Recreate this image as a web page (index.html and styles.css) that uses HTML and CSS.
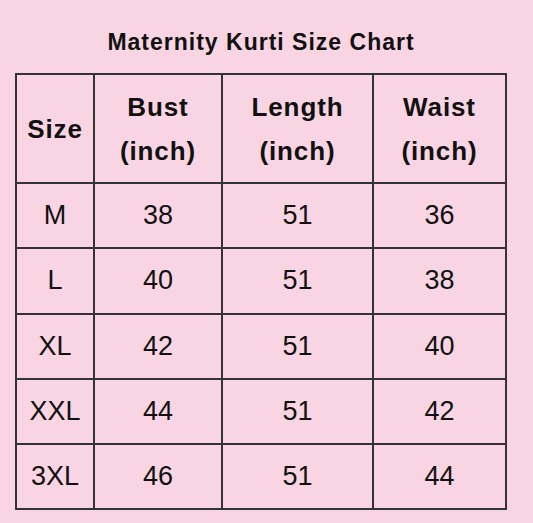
FILE: index.html
```html
<!DOCTYPE html>
<html>
<head>
<meta charset="utf-8">
<link rel="stylesheet" href="styles.css">
</head>
<body>
<div class="page">
  <h1 class="title">Maternity Kurti Size Chart</h1>
  <table class="chart">
    <colgroup>
      <col class="c1"><col class="c2"><col class="c3"><col class="c4">
    </colgroup>
    <thead>
      <tr>
        <th>Size</th>
        <th>Bust<br>(inch)</th>
        <th>Length<br>(inch)</th>
        <th>Waist<br>(inch)</th>
      </tr>
    </thead>
    <tbody>
      <tr><td>M</td><td>38</td><td>51</td><td>36</td></tr>
      <tr><td>L</td><td>40</td><td>51</td><td>38</td></tr>
      <tr><td>XL</td><td>42</td><td>51</td><td>40</td></tr>
      <tr><td>XXL</td><td>44</td><td>51</td><td>42</td></tr>
      <tr><td>3XL</td><td>46</td><td>51</td><td>44</td></tr>
    </tbody>
  </table>
</div>
</body>
</html>
```
FILE: styles.css
```css
html, body {
  margin: 0;
  padding: 0;
  background: #f9d5e3;
}
.page {
  width: 533px;
  height: 523px;
  padding-top: 27px;
  box-sizing: border-box;
  font-family: "Liberation Sans", Arial, sans-serif;
  color: #111;
}
.title {
  margin: 0 0 16px 0;
  padding-right: 11px;
  font-size: 23px;
  line-height: 30px;
  font-weight: bold;
  text-align: center;
  letter-spacing: 1px;
}
.chart {
  margin-left: 15px;
  width: 490px;
  border-collapse: collapse;
  table-layout: fixed;
  border: 2px solid #333;
}
.c1 { width: 78px; }
.c2 { width: 128px; }
.c3 { width: 151px; }
.c4 { width: 133px; }
.chart th, .chart td {
  border: 2px solid #333;
  text-align: center;
  vertical-align: middle;
  padding: 0;
}
.chart th {
  height: 107px;
  font-size: 26px;
  line-height: 44px;
  font-weight: bold;
  letter-spacing: 0.9px;
}
.chart td {
  height: 63.3px;
  font-size: 27px;
  font-weight: normal;
}
```
